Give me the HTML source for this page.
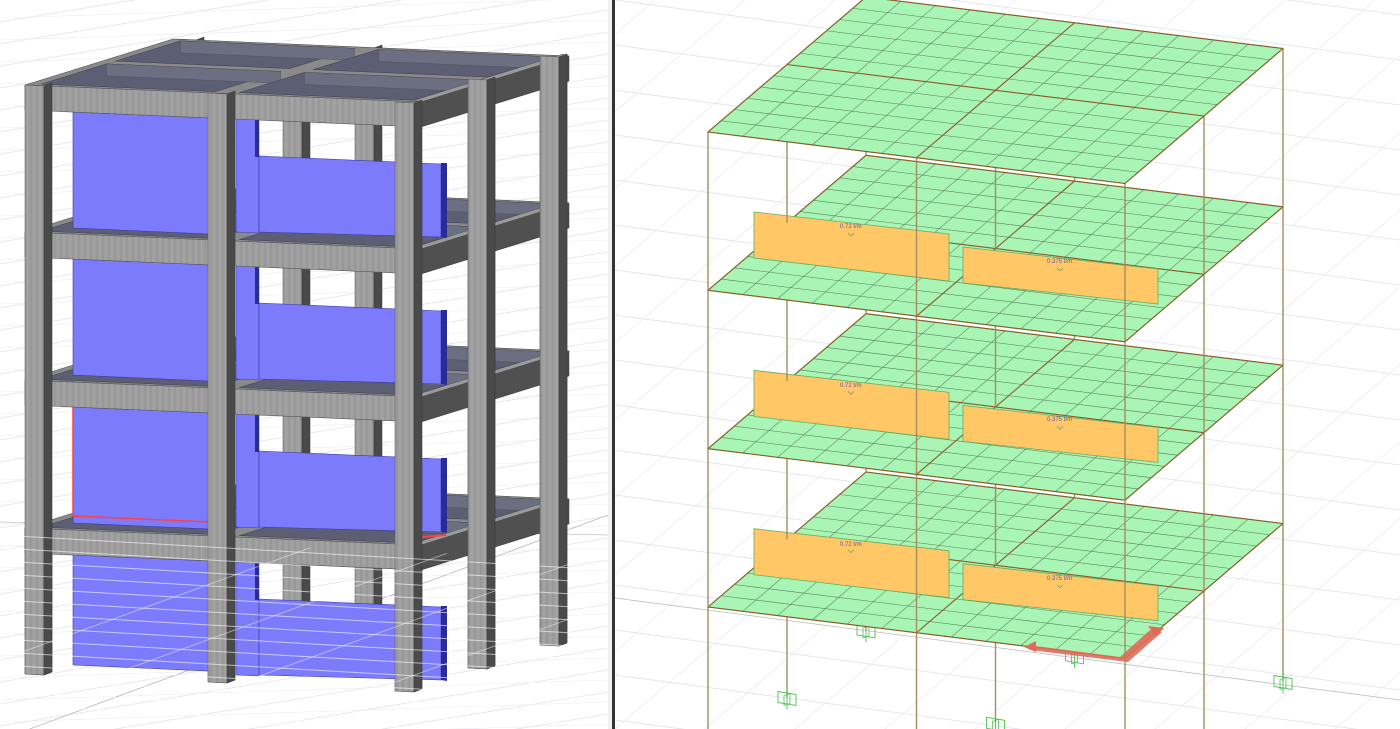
<!DOCTYPE html>
<html><head><meta charset="utf-8">
<style>
html,body{margin:0;padding:0;background:#fff;width:1400px;height:729px;overflow:hidden}
svg{display:block;position:absolute;left:0;top:0;font-family:"Liberation Sans",sans-serif}
</style></head>
<body>
<svg id="s" width="1400" height="729" viewBox="0 0 1400 729" xmlns="http://www.w3.org/2000/svg">
<defs>
<pattern id="tex" width="6" height="40" patternUnits="userSpaceOnUse">
<rect width="6" height="40" fill="#9e9e9e"/>
<line x1="1" y1="0" x2="1" y2="40" stroke="#8a8a8a" stroke-width="0.6"/>
<line x1="4" y1="0" x2="4" y2="40" stroke="#b0b0b0" stroke-width="0.5"/>
</pattern>
<clipPath id="lowclip"><polygon points="0,535 608,560 608,729 0,729"/></clipPath>
<clipPath id="leftclip"><rect x="0" y="0" width="608" height="729"/></clipPath>
<clipPath id="rightclip"><rect x="615" y="0" width="785" height="729"/></clipPath>
</defs>
<rect width="1400" height="729" fill="#fff"/>
<g id="lbg" clip-path="url(#leftclip)"></g>
<g id="left" clip-path="url(#leftclip)"></g>
<g id="lgrid" clip-path="url(#lowclip)"></g>
<rect x="608" y="0" width="5" height="729" fill="#f0f0f0"/>
<rect x="612" y="0" width="3" height="729" fill="#333"/>
<g id="rbg" clip-path="url(#rightclip)"></g>
<g id="right" clip-path="url(#rightclip)"></g>
<g id="labels" font-size="6" fill="#5a5ab0">
<text x="840" y="228">0.72 t/m</text>
<text x="1047" y="263">0.375 t/m</text>
<text x="840" y="387">0.72 t/m</text>
<text x="1047" y="421">0.375 t/m</text>
<text x="840" y="546">0.72 t/m</text>
<text x="1047" y="580">0.375 t/m</text>
</g>
</svg>
<script>
var NS="http://www.w3.org/2000/svg";
function el(g,t,a){var e=document.createElementNS(NS,t);for(var k in a)e.setAttribute(k,a[k]);document.getElementById(g).appendChild(e);return e;}
function poly(g,pts,fill,stroke,sw,op){return el(g,"polygon",{points:pts.map(function(p){return p[0].toFixed(1)+","+p[1].toFixed(1)}).join(" "),fill:fill,stroke:stroke||"none","stroke-width":sw||0,opacity:op==null?1:op});}
function line(g,a,b,c,w,op){return el(g,"line",{x1:a[0],y1:a[1],x2:b[0],y2:b[1],stroke:c,"stroke-width":w,opacity:op==null?1:op});}

/* ---------- LEFT background grid ---------- */
for(var i=-30;i<40;i++){line("lbg",[0,i*22],[608,i*22-100],"#e3e3ec",0.8);}
for(var i=-10;i<40;i++){line("lbg",[0,i*22+40],[608,i*22+20],"#ececf2",0.6);}

/* ---------- LEFT structure ---------- */
var tops=[85,232,380,528];
function Q(u,v,L){return [25+396*u+148*v, tops[L]+17*u-46*v];}
// column table: [x, topY]
var colsL=[[25,85,0],[208,93,0],[395,102,0],[101,62,1],[283,70,1],[468,79,1],[177,39,2],[355,47,2],[540,56,2]];
function colSeg(c,y1,y2){var x=c[0];
 poly("left",[[x,y1],[x+19,y1+1],[x+19,y2+1],[x,y2]],"url(#tex)","#555",0.5);
 poly("left",[[x+19,y1+1],[x+27,y1-2],[x+27,y2-2],[x+19,y2+1]],"#4a4a4a","#333",0.5);}
var dL=[0,147,295,443,589];
function slabL(L){
 poly("left",[Q(0,0,L),Q(1,0,L),Q(1,1,L),Q(0,1,L)],"#8a8a8a","#444",0.5);
 [[0,.5],[.5,1]].forEach(function(a){[[0,.5],[.5,1]].forEach(function(b){
  var e=0.03;poly("left",[Q(a[0]+e,b[0]+e,L),Q(a[1]-e,b[0]+e,L),Q(a[1]-e,b[1]-e,L),Q(a[0]+e,b[1]-e,L)],"#5c5e74","#3c3e50",0.5);
  var p1=Q(a[0]+0.03,b[1]-0.03,L),p2=Q(a[1]-0.03,b[1]-0.03,L);
  poly("left",[p1,p2,[p2[0],p2[1]+12],[p1[0],p1[1]+12]],"#6c6e82","#444",0.3);
 });});
}
// bottom segments (ground to level 3 bottom)
colsL.forEach(function(c){colSeg(c,c[1]+dL[3],c[1]+dL[4]);});
for(var L=3;L>=0;L--){
 slabL(L);
 if(L>0) colsL.forEach(function(c){if(c[2]>0)colSeg(c,c[1]+dL[L-1],c[1]+dL[L]);});
}
// side beams (right edge, along depth)
for(var L=0;L<4;L++){var a=Q(1,0,L),b=Q(1,1,L);
 poly("left",[[a[0],a[1]],[b[0],b[1]],[b[0],b[1]+25],[a[0],a[1]+25]],"#505050","#333",0.5);
 poly("left",[[a[0],a[1]],[b[0],b[1]],[b[0]-6,b[1]-2],[a[0]-6,a[1]-2]],"#9a9a9a","#444",0.4);
}
// re-draw right mid/back columns over side beams
[colsL[5],colsL[8]].forEach(function(c){colSeg(c,c[1],c[1]+589);});
// walls
var wf="#7b7bfb",we="#2b2b95";
for(var L=0;L<4;L++){
 var t=tops[L];
 var h=(L==3)?110:116;
 poly("left",[[73,t+27],[209,t+33],[209,t+33+h],[73,t+27+h]],wf,"#3a3aa0",0.6);
 poly("left",[[236,t+34],[259,t+35],[259,t+148],[236,t+147]],wf,"#3a3aa0",0.5);
 poly("left",[[255,t+35],[259,t+35],[259,t+72],[255,t+72]],we);
 poly("left",[[259,t+71],[441,t+79],[441,t+152],[259,t+147]],wf,"#3a3aa0",0.6);
 poly("left",[[441,t+78],[447,t+78],[447,t+153],[441,t+152]],we);
}
line("left",[73,404],[73,516],"#ff4040",1.5);
line("left",[73,516],[209,522],"#ff4040",1.5);
line("left",[421,537],[446,535],"#ff4040",2);
// front beams
for(var L=0;L<4;L++){var a=Q(0,0,L),b=Q(1,0,L);
 poly("left",[a,b,[b[0],b[1]+25],[a[0],a[1]+25]],"url(#tex)","#555",0.6);
}
// front columns
[colsL[0],colsL[1],colsL[2]].forEach(function(c){colSeg(c,c[1],c[1]+589);});
// ground grid overlay (lower part only)
for(var i=0;i<14;i++){line("lgrid",[0,535+i*13],[608,570+i*13],"#ffffff",1,0.6);}
for(var i=0;i<6;i++){line("lgrid",[0,660+i*55],[608,440+i*55],"#ffffff",0.8,0.55);}
line("lbg",[0,522],[608,535],"#aaa",0.6);
line("lbg",[0,740],[608,515],"#aaa",0.6);

/* ---------- RIGHT ---------- */
for(var i=-20;i<30;i++){line("rbg",[615,i*45],[1400,i*45+105],"#e0e0ea",0.8);}
for(var i=-10;i<30;i++){line("rbg",[615+i*90,729],[615+i*90+850,0],"#e8e8ef",0.7);}
line("rbg",[615,598],[1400,700],"#b8b8c0",0.7);
var RY=[132,290.3,448.7,607];
function P(u,v,L){return [708+417*u+158*v, RY[L]+51.5*u-135*v];}
var colc="#a58d5e";
var cols=[];[0,.5,1].forEach(function(u){[0,.5,1].forEach(function(v){cols.push([u,v]);});});
function segs(L1,y2f){cols.forEach(function(c){var a=P(c[0],c[1],L1);var yb=y2f(c,a);line("right",a,[a[0],yb],colc,1.4);});}
function slab(L){
 poly("right",[P(0,0,L),P(1,0,L),P(1,1,L),P(0,1,L)],"#a9f5b5","#5fbf5f",1);
 for(var i=1;i<12;i++){var f=i/12;
  line("right",P(f,0,L),P(f,1,L),"#5b7d5b",0.55);
  line("right",P(0,f,L),P(1,f,L),"#5b7d5b",0.55);}
 [0,.5,1].forEach(function(f){
  line("right",P(f,0,L),P(f,1,L),"#8a5a2a",1.1);
  line("right",P(0,f,L),P(1,f,L),"#8a5a2a",1.1);});
}
function panels(L){
 var d=RY[L]-RY[1];
 poly("right",[[754,212+d],[949,234+d],[949,281+d],[754,258+d]],"#ffc766","#5fb05f",0.8);
 poly("right",[[963,247+d],[1158,269+d],[1158,304+d],[963,283+d]],"#ffc766","#5fb05f",0.8);
 line("right",[848,233+d],[851,236+d],"#6a9a6a",0.7);line("right",[854,233+d],[851,236+d],"#6a9a6a",0.7);
 line("right",[1057,268+d],[1060,271+d],"#6a9a6a",0.7);line("right",[1063,268+d],[1060,271+d],"#6a9a6a",0.7);
}
segs(3,function(c,a){return Math.min(a[1]+158,729);});
cols.forEach(function(c){var a=P(c[0],c[1],3);var x=a[0],y=a[1]+158;if(y<735){
 poly("right",[[x-9,y-6],[x+9,y-3],[x+9,y+8],[x-9,y+5]],"none","#55c055",0.9);
 line("right",[x,y-10],[x,y+12],"#55c055",0.9);
 poly("right",[[x-3,y-2],[x+3,y-4],[x+3,y+6],[x-3,y+8]],"none","#55c055",0.8);}});
slab(3);
poly("right",[[1028,645],[1120,657],[1150,630],[1162,632],[1128,662],[1030,650]],"#e06a58","none",0,0.9);
poly("right",[[1024,647],[1036,641],[1036,652]],"#e06a58");
poly("right",[[1148,626],[1164,628],[1156,636]],"#e06a58");
panels(3);
segs(2,function(c,a){return a[1]+158.3;});
slab(2);panels(2);
segs(1,function(c,a){return a[1]+158.3;});
slab(1);panels(1);
segs(0,function(c,a){return a[1]+158.3;});
slab(0);
</script>
</body></html>
